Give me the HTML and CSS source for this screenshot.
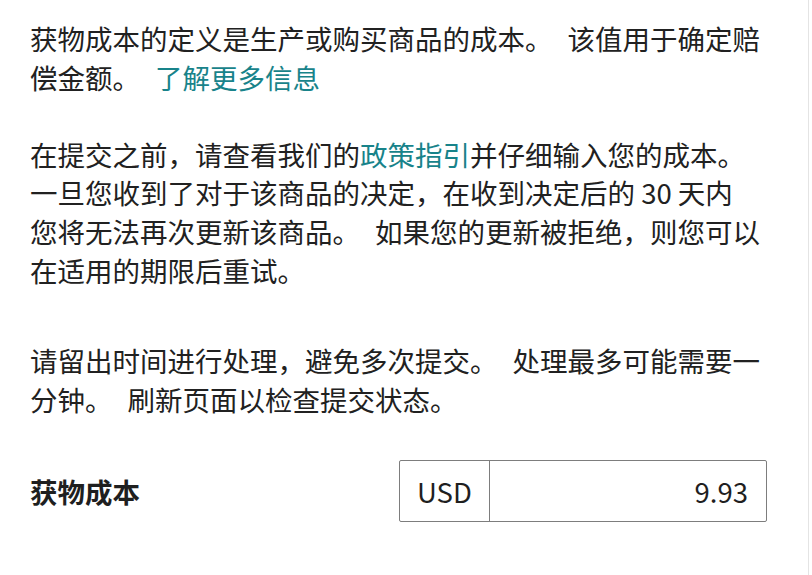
FILE: index.html
```html
<!DOCTYPE html>
<html lang="zh-CN">
<head>
<meta charset="utf-8">
<link rel="stylesheet" href="styles.css">
</head>
<body>
<div class="page">
  <p class="para p1">获物成本的定义是生产或购买商品的成本。<span class="gap"></span>该值用于确定赔<br>偿金额。<span class="gap"></span><a class="link" href="#">了解更多信息</a></p>
  <p class="para p2">在提交之前，请查看我们的<a class="link" href="#">政策指引</a>并仔细输入您的成本。<br>一旦您收到了对于该商品的决定，在收到决定后的 30 天内<br>您将无法再次更新该商品。<span class="gap"></span>如果您的更新被拒绝，则您可以<br>在适用的期限后重试。</p>
  <p class="para p3">请留出时间进行处理，避免多次提交。<span class="gap"></span>处理最多可能需要一<br>分钟。<span class="gap"></span>刷新页面以检查提交状态。</p>
  <div class="field">
    <div class="label">获物成本</div>
    <div class="input">
      <div class="currency">USD</div>
      <div class="value">9.93</div>
    </div>
  </div>
</div>
</body>
</html>
```
FILE: styles.css
```css
html, body {
  margin: 0;
  padding: 0;
  background: #ffffff;
}

body {
  font-family: "Noto Sans CJK SC", "Noto Sans", sans-serif;
  color: #212121;
}

.page {
  width: 809px;
  min-height: 575px;
  box-sizing: border-box;
  border-right: 1px solid #e4e4e4;
  padding: 19px 0 0 30px;
}

.para {
  margin: 0;
  width: 778px;
  white-space: nowrap;
  font-size: 27.5px;
  line-height: 38.8px;
}

.p1 { margin-bottom: 38px; }
.p2 { margin-bottom: 51px; }
.p3 { margin-bottom: 42px; }

.gap {
  display: inline-block;
  width: 15px;
}

.link {
  color: #18838a;
  text-decoration: none;
}

.field {
  display: flex;
  align-items: center;
  height: 62px;
}

.label {
  width: 369px;
  font-size: 27.5px;
  font-weight: 700;
  color: #1f1f1f;
}

.input {
  display: flex;
  width: 368px;
  height: 62px;
  box-sizing: border-box;
  border: 1px solid #7d7d7d;
  border-radius: 2px;
  font-size: 27.5px;
  color: #1f1f1f;
}

.currency {
  width: 89px;
  border-right: 1px solid #7d7d7d;
  display: flex;
  align-items: center;
  justify-content: center;
}

.value {
  flex: 1;
  display: flex;
  align-items: center;
  justify-content: flex-end;
  padding-right: 18px;
}
```
